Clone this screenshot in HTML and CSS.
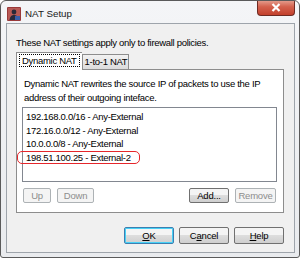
FILE: index.html
```html
<!DOCTYPE html>
<html lang="en">
<head>
  <meta charset="UTF-8" />
  <title>NAT Setup</title>
  <link rel="stylesheet" href="styles.css">
</head>
<body>

<div class="window">
  <div class="titlebar">
    <svg class="app-icon" width="14" height="14" viewBox="0 0 14 14">
      <rect x="0" y="0" width="14" height="14" rx="1" fill="#9a3a3a"/>
      <rect x="1" y="1" width="12" height="12" fill="#b85a55"/>
      <circle cx="7" cy="5" r="2.4" fill="#2a2a3a"/>
      <path d="M2.5 13 C3 9 5 8 7 8 C9 8 11 9 11.5 13 Z" fill="#2a2a3a"/>
      <rect x="8" y="9" width="5" height="4" fill="#3b5fa8"/>
    </svg>
    <span class="title">NAT Setup</span>
    <div class="close-btn">
      <svg width="10" height="9" viewBox="0 0 10 9">
        <path d="M1.5 1 L8.5 8 M8.5 1 L1.5 8" stroke="#fff" stroke-width="2.2"/>
      </svg>
    </div>
  </div>

  <div class="client">
    <p class="intro">These NAT settings apply only to firewall policies.</p>

    <div class="tabs">
      <div class="tab active"><span class="focus">Dynamic NAT</span></div>
      <div class="tab">1-to-1 NAT</div>
    </div>

    <div class="tab-panel">
      <p class="desc">Dynamic NAT rewrites the source IP of packets to use the IP address of their outgoing inteface.</p>

      <ul class="listbox">
        <li>192.168.0.0/16 - Any-External</li>
        <li>172.16.0.0/12 - Any-External</li>
        <li>10.0.0.0/8 - Any-External</li>
        <li><span class="marked">198.51.100.25 - External-2</span></li>
      </ul>

      <div class="list-actions">
        <div class="group">
          <button class="btn up" disabled>Up</button>
          <button class="btn down" disabled>Down</button>
        </div>
        <div class="group">
          <button class="btn add">Add...</button>
          <button class="btn remove" disabled>Remove</button>
        </div>
      </div>
    </div>

    <div class="dialog-actions">
      <button class="btn wide default"><u>O</u>K</button>
      <button class="btn wide">C<u>a</u>ncel</button>
      <button class="btn wide"><u>H</u>elp</button>
    </div>
  </div>
</div>

</body>
</html>
```

FILE: styles.css
```css
body {
  margin: 0;
  background: #fff;
  font-family: 'Liberation Sans', Arial, sans-serif;
  font-size: 9.5px;
  letter-spacing: -0.3px;
  color: #000;
}
.window {
  width: 298px;
  height: 256px;
  border: 1px solid #5a5a5a;
  border-radius: 6px 6px 3px 3px;
  background: linear-gradient(#f4f5f7, #e9ebee);
  display: flex;
  flex-direction: column;
  overflow: hidden;
}
.titlebar {
  height: 22px;
  flex: none;
  display: flex;
  align-items: flex-start;
  position: relative;
}
.app-icon {
  margin: 6px 0 0 6px;
}
.title {
  font-size: 9.8px;
  letter-spacing: 0;
  margin: 7px 0 0 4px;
  color: #1a1a1a;
}
.close-btn {
  position: absolute;
  right: 4px;
  top: -1px;
  width: 36px;
  height: 15px;
  border: 1px solid #6e2a22;
  border-top: none;
  border-radius: 0 0 4px 4px;
  background: linear-gradient(#e6a394, #d4614d 45%, #c2402c);
  display: flex;
  align-items: center;
  justify-content: center;
}
.client {
  margin: 0 4px 4px 5px;
  flex: 1;
  border: 1px solid #9ea4ab;
  background: #f0f0f0;
  display: flex;
  flex-direction: column;
  padding: 0 10px 0 9px;
}
.intro {
  margin: 12px 0 0 0;
  line-height: 13px;
}
.tabs {
  display: flex;
  align-items: flex-end;
  margin-top: 3px;
  height: 17px;
  flex: none;
  position: relative;
  z-index: 1;
}
.tab {
  border: 1px solid #8d8d8d;
  border-bottom: none;
  background: linear-gradient(#f2f2f2, #dcdcdc);
  padding: 0 1px 0 2px;
  height: 14px;
  line-height: 14px;
}
.tab.active {
  background: #fff;
  height: 17px;
  line-height: 16px;
  padding: 0 3px 0 3px;
  margin-bottom: -1px;
  border-right: none;
}
.focus {
  outline: 1px dotted #000;
  padding: 0 2px;
}
.tab-panel {
  border: 1px solid #8d8d8d;
  background: #fff;
  height: 144px;
  flex: none;
  box-sizing: border-box;
  padding: 0 6px 0 5px;
  display: flex;
  flex-direction: column;
}
.desc {
  margin: 7px 0 0 2px;
  line-height: 14px;
}
.listbox {
  list-style: none;
  margin: 2px 0 0 0;
  padding: 2px 2px;
  border: 1px solid #828790;
  height: 75px;
  flex: none;
  box-sizing: border-box;
}
.listbox li {
  line-height: 13.5px;
  height: 13.5px;
  padding-left: 1px;
}
.marked {
  position: relative;
}
.marked::after {
  content: "";
  position: absolute;
  left: -9px;
  right: -9px;
  top: -1px;
  bottom: -1px;
  border: 1.5px solid #e5262b;
  border-radius: 5px;
}
.list-actions {
  display: flex;
  justify-content: space-between;
  margin-top: 6px;
  padding: 0 1px 0 1px;
}
.group {
  display: flex;
  gap: 6px;
}
.btn {
  font-family: 'Liberation Sans', Arial, sans-serif;
  font-size: 9.5px;
  letter-spacing: -0.2px;
  height: 15px;
  padding: 0;
  border: 1px solid #707070;
  border-radius: 2px;
  background: linear-gradient(#f4f4f4 45%, #dddddd 50%, #cfcfcf);
  color: #000;
  line-height: 13px;
}
.btn:disabled {
  border-color: #adb2b5;
  background: #f4f4f4;
  color: #8d8d8d;
}
.btn.up { width: 28px; }
.btn.down { width: 37px; }
.btn.add { width: 40px; }
.btn.remove { width: 41px; }
.dialog-actions {
  display: flex;
  justify-content: flex-end;
  gap: 5px;
  margin-top: 14px;
}
.btn.wide {
  width: 50px;
  height: 17px;
}
.btn.default {
  border-color: #3c7fb1;
  box-shadow: inset 0 0 0 1px #48d1f6;
}
```
